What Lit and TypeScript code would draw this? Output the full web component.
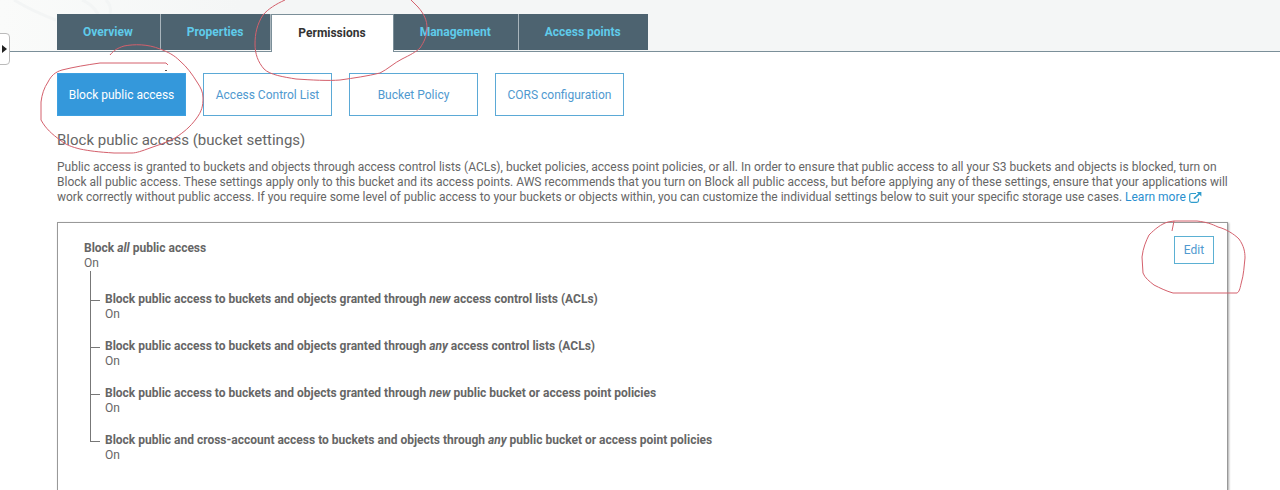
import { LitElement, html, css, svg } from "lit";
import { customElement, state } from "lit/decorators.js";

interface Setting {
  before: string;
  em: string;
  after: string;
  value: string;
}

const TABS = ["Overview", "Properties", "Permissions", "Management", "Access points"];
const SECTIONS = ["Block public access", "Access Control List", "Bucket Policy", "CORS configuration"];

const GRANTED = "Block public access to buckets and objects granted through ";
const SETTINGS: Setting[] = [
  { before: GRANTED, em: "new", after: " access control lists (ACLs)", value: "On" },
  { before: GRANTED, em: "any", after: " access control lists (ACLs)", value: "On" },
  { before: GRANTED, em: "new", after: " public bucket or access point policies", value: "On" },
  {
    before: "Block public and cross-account access to buckets and objects through ",
    em: "any",
    after: " public bucket or access point policies",
    value: "On",
  },
];

/* Hand-drawn pen strokes laid over the page. */
const STROKES = [
  "M110 55 C114 50 118 48 124 46 C134 44 148 44 160 49 C168 52 174 55 180 61 C187 67 192 74 197 82 C201 88 203 92 203 98 C203 106 202 111 196 119 C190 127 184 132 175 138 C166 143 158 145 150 148 C142 151 136 153 132 153 L114 153 C98 152 90 151 80 149 C72 147 66 145 60 140 C52 134 46 129 41 120 L41 102 C42 94 44 88 48 82 C51 76 55 72 62 70 C74 67 86 65 100 63 L166 63 L168 65",
  "M285 0 C276 4 268 9 263 15 C257 24 255 34 255 44 C255 54 258 62 264 69 C270 75 284 77 296 79 C312 80 328 81 340 80 C354 78 368 76 380 73 C388 69 394 63 402 59 C410 55 416 52 420 48 C424 42 427 36 427 28 C427 20 424 14 418 7 L411 0",
  "M1172 231 L1174 221 L1197 221 C1206 222 1212 224 1218 227 C1226 229 1234 234 1239 239 C1244 246 1245 252 1245 258 C1244 266 1244 274 1241 284 C1240 289 1239 292 1237 293 L1173 293 C1166 291 1160 288 1154 285 C1149 281 1145 278 1143 273 L1142 257 C1143 248 1146 241 1149 235 C1155 229 1161 224 1168 222 L1174 221",
];

@customElement("app-root")
export class AppRoot extends LitElement {
  @state() private tab = 2;
  @state() private section = 0;

  static styles = css`
    :host {
      position: relative;
      display: flex;
      flex-direction: column;
      height: 100vh;
      overflow: hidden;
      background: #fff;
      color: #666;
      font: 12px/15px Roboto, "Liberation Sans", sans-serif;
    }
    * {
      box-sizing: border-box;
    }
    button {
      font: inherit;
      cursor: pointer;
      white-space: nowrap;
    }
    .header {
      position: relative;
      display: flex;
      padding: 14px 57px 0;
      background: linear-gradient(90deg, #fafbfa, #f4f6f6 240px);
      border-bottom: 1px solid #7b8f99;
    }
    .swirl {
      position: absolute;
      left: 0;
      top: 0;
      width: 130px;
      height: 51px;
    }
    .tabs {
      position: relative;
      display: flex;
    }
    .tab {
      height: 36px;
      margin: 0 0 1px;
      padding: 0 27px 0 26px;
      border: 0;
      border-right: 1px solid #a9b5bc;
      background: #4d6370;
      color: #5fcbea;
      font-weight: 700;
    }
    .tab:last-child {
      border-right: 0;
    }
    .tab.active {
      height: 38px;
      margin-bottom: -1px;
      border: 1px solid #7b8f99;
      border-bottom: 0;
      background: #fff;
      color: #333;
    }
    .drawer {
      position: absolute;
      left: -4px;
      top: 33px;
      width: 14px;
      height: 32px;
      padding: 0 0 0 5px;
      border: 1px solid #bbb;
      border-radius: 4px;
      background: #fff;
      display: flex;
      align-items: center;
    }
    .drawer svg {
      flex: none;
    }
    .main {
      flex: 1;
      display: flex;
      flex-direction: column;
      padding: 21px 52px 0 57px;
    }
    .sections {
      display: flex;
      gap: 17px;
    }
    .section {
      width: 129px;
      height: 43px;
      padding: 1px 0 0;
      border: 1px solid #5ba9d6;
      background: #fff;
      color: #5099cf;
    }
    .section.active {
      border-color: #3da0e0;
      background: #3498db;
      color: #fff;
    }
    h1 {
      margin: 15px 0 0;
      font-size: 15px;
      line-height: 19px;
      font-weight: 400;
    }
    p {
      margin: 10px 0 0;
    }
    a {
      display: inline-flex;
      align-items: center;
      gap: 3px;
      color: #2a8fcf;
      text-decoration: none;
    }
    .card {
      flex: 1;
      display: flex;
      align-items: flex-start;
      justify-content: space-between;
      margin-top: 17px;
      padding: 13px 13px 0 26px;
      border: 1px solid #999;
      border-bottom: 0;
      box-shadow: 1px 1px 2px #aaa;
    }
    .edit {
      width: 40px;
      height: 28px;
      padding: 0;
      border: 1px solid #5bb0d3;
      background: #fff;
      color: #5099cf;
    }
    dl,
    dd {
      margin: 0;
    }
    dl {
      padding-top: 5px;
    }
    dt {
      font-weight: 700;
    }
    .tree {
      display: flex;
      flex-direction: column;
      margin: 0 0 0 6px;
      padding: 0;
      list-style: none;
    }
    .node {
      position: relative;
      padding: 17px 0 0 15px;
    }
    .node:first-child {
      padding-top: 21px;
    }
    .node::before {
      content: "";
      position: absolute;
      left: 0;
      top: 0;
      width: 9px;
      height: 25px;
      border: solid #777;
      border-width: 0 0 1px 1px;
    }
    .node:first-child::before {
      height: 29px;
    }
    .node:not(:last-child)::after {
      content: "";
      position: absolute;
      left: 0;
      top: 0;
      bottom: 0;
      border-left: 1px solid #777;
    }
    .node dl {
      padding: 0;
    }
    .pen {
      position: absolute;
      left: 0;
      top: 0;
      width: 1280px;
      height: 300px;
      pointer-events: none;
    }
  `;

  render() {
    return html`
      <header class="header">
        <svg class="swirl" viewBox="0 0 130 51" fill="none" stroke="#f3f5f5" stroke-width="3" aria-hidden="true">
          <path d="M14 0 Q34 12 56 20 M106 0 Q112 6 110 14 M82 0 Q92 4 98 14" />
        </svg>
        <nav class="tabs" role="tablist">
          ${TABS.map(
            (name, i) => html`<button
              class="tab ${i === this.tab ? "active" : ""}"
              role="tab"
              aria-selected=${i === this.tab}
              @click=${() => (this.tab = i)}
            >${name}</button>`
          )}
        </nav>
        <button class="drawer" aria-label="Open side panel">
          <svg width="6" height="8" viewBox="0 0 6 8" aria-hidden="true"><path d="M0 0L5 4L0 8Z" fill="#222" /></svg>
        </button>
      </header>
      <main class="main">
        <div class="sections">
          ${SECTIONS.map(
            (name, i) => html`<button
              class="section ${i === this.section ? "active" : ""}"
              @click=${() => (this.section = i)}
            >${name}</button>`
          )}
        </div>
        <h1>Block public access (bucket settings)</h1>
        <p>
          Public access is granted to buckets and objects through access control lists (ACLs), bucket policies, access
          point policies, or all. In order to ensure that public access to all your S3 buckets and objects is blocked,
          turn on Block all public access. These settings apply only to this bucket and its access points. AWS
          recommends that you turn on Block all public access, but before applying any of these settings, ensure that
          your applications will work correctly without public access. If you require some level of public access to
          your buckets or objects within, you can customize the individual settings below to suit your specific storage
          use cases.
          <a href="#learn-more"
            >Learn more<svg width="13" height="11" viewBox="0 0 13 11" fill="none" stroke="#2f9ccc" aria-hidden="true">
              <path d="M7 1.5H2.5Q.7 1.5 .7 3.3V8.5Q.7 10.3 2.5 10.3H7.7Q9.5 10.3 9.5 8.5V6.5" stroke-width="1.2" />
              <path d="M5 6.6L10.5 1.6" stroke-width="1.6" />
              <path d="M7.8 0H12.4V4.6Z" fill="#2f9ccc" stroke="none" /></svg
          ></a>
        </p>
        <section class="card">
          <div>
            <dl>
              <dt>Block <em>all</em> public access</dt>
              <dd>On</dd>
            </dl>
            <ul class="tree">
              ${SETTINGS.map(
                (s) => html`<li class="node">
                  <dl>
                    <dt>${s.before}<em>${s.em}</em>${s.after}</dt>
                    <dd>${s.value}</dd>
                  </dl>
                </li>`
              )}
            </ul>
          </div>
          <button class="edit">Edit</button>
        </section>
      </main>
      <svg class="pen" viewBox="0 0 1280 300" fill="none" stroke="#d4606c" aria-hidden="true">
        ${STROKES.map((d) => svg`<path d=${d} />`)}
        <path d="M165 70.5H167" stroke="#555" />
      </svg>
    `;
  }
}
